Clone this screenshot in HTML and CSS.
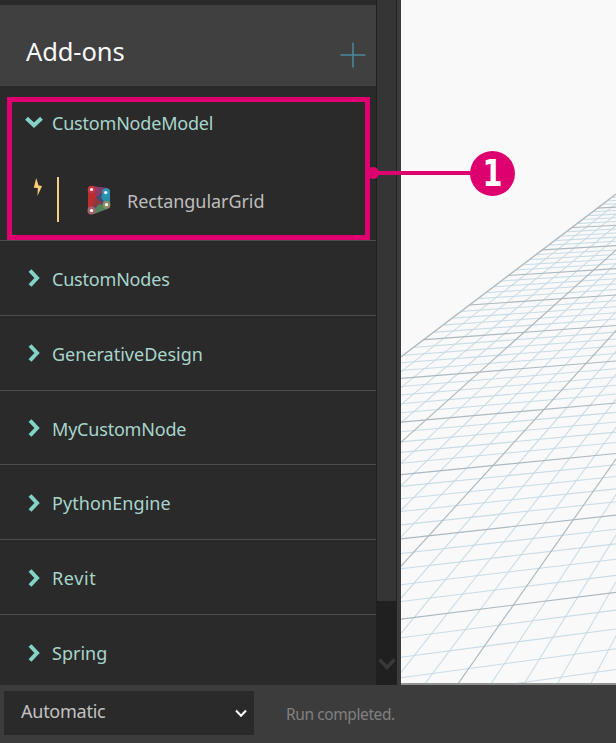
FILE: index.html
```html
<!DOCTYPE html>
<html lang="en">
<head>
<meta charset="utf-8">
<title>Add-ons</title>
<link rel="stylesheet" href="styles.css">
</head>
<body>
<div class="app">
  <div class="workspace">
    <aside class="library">
      <header class="library-header">
        <h1>Add-ons</h1>
        <svg class="plus" viewBox="0 0 26 26"><path d="M13 .5v25M.5 13h25"/></svg>
      </header>
      <section class="package open">
        <div class="row">
          <svg class="chevron" viewBox="0 0 18 18"><path d="M1.5 5.2 9 12.3l7.5-7.1"/></svg>
          <span class="tight">CustomNodeModel</span>
        </div>
        <div class="node">
          <svg class="bolt" viewBox="0 0 10 18"><path d="M3.2 0 .8 9.8l4 .2-.3 8L9 8 5.6 7.5z"/></svg>
          <i class="bar"></i>
          <svg class="node-icon" viewBox="0 0 24 30">
            <path fill="#743f58" d="M1 4Q1 1 4 1L20 3q3 .5 3 3v15q0 2-2 3L5 29q-4 1-4-3z"/>
            <path fill="#b92e30" d="M1 4 4 1l6 10-5 15-4 1z"/>
            <path fill="#883c67" d="M4 1 20 3l-10 9z"/>
            <path fill="#3f4f75" d="m9 12 10-6 1 15-6-5z"/>
            <path fill="#298fae" d="m14 12 5-9 4 3v15l-3 1z"/>
            <path fill="#53835a" d="m5 27 7-8 10 3-2 2L7 29z"/>
            <path fill="#883b3e" d="m4 25 5-13 4 5z"/>
            <circle cx="4.5" cy="4.5" r="3.8" fill="#cc343c"/><circle cx="19" cy="7.3" r="4" fill="#2f94b7"/>
            <circle cx="19.5" cy="19.7" r="4" fill="#8a8b5e"/><circle cx="4.5" cy="25.5" r="4" fill="#9d6670"/>
            <g fill="#fff"><circle cx="4.5" cy="4.5" r="1.6"/><circle cx="18.7" cy="7.5" r="1.6"/><circle cx="19.5" cy="19.7" r="1.6"/><circle cx="4.5" cy="25.5" r="1.6"/></g>
          </svg>
          <span>RectangularGrid</span>
        </div>
      </section>
      <section class="package"><svg class="chevron" viewBox="0 0 18 18"><path d="m5 1.5 7 7.5-7 7.5"/></svg><span class="tight">CustomNodes</span></section>
      <section class="package"><svg class="chevron" viewBox="0 0 18 18"><path d="m5 1.5 7 7.5-7 7.5"/></svg><span>GenerativeDesign</span></section>
      <section class="package"><svg class="chevron" viewBox="0 0 18 18"><path d="m5 1.5 7 7.5-7 7.5"/></svg><span class="tight">MyCustomNode</span></section>
      <section class="package"><svg class="chevron" viewBox="0 0 18 18"><path d="m5 1.5 7 7.5-7 7.5"/></svg><span class="loose">PythonEngine</span></section>
      <section class="package"><svg class="chevron" viewBox="0 0 18 18"><path d="m5 1.5 7 7.5-7 7.5"/></svg><span class="looser">Revit</span></section>
      <section class="package"><svg class="chevron" viewBox="0 0 18 18"><path d="m5 1.5 7 7.5-7 7.5"/></svg><span>Spring</span></section>
    </aside>
    <div class="scrollbar">
      <div class="thumb"></div>
      <svg class="scroll-down" viewBox="0 0 18 14"><path d="m1.5 2.5 7.5 8 7.5-8"/></svg>
    </div>
    <main class="canvas">
      <svg id="grid" viewBox="401 0 215 683">
        <defs><clipPath id="plane"><path d="M401 356.5 616 194V683H401z"/></clipPath></defs>
        <path class="edge" d="M401 356.8 616 194"/>
      </svg>
    </main>
  </div>
  <footer class="runbar">
    <div class="select"><span>Automatic</span><svg viewBox="0 0 12 9"><path d="m1 1.5 5 5.3 5-5.3"/></svg></div>
    <span class="status">Run completed.</span>
  </footer>
  <div class="callout-box"></div>
  <div class="callout-line"></div>
  <div class="callout-number"><span>1</span></div>
</div>
<script src="grid.js"></script>
</body>
</html>
```
FILE: styles.css
```css
* { box-sizing: border-box; }
body { margin: 0; font-family: "Noto Sans", sans-serif; background: #3c3c3c; }
svg { display: block; fill: none; flex: none; }
.app { position: relative; width: 616px; height: 743px; overflow: hidden; display: flex; flex-direction: column; }
.workspace { height: 685px; display: flex; background: #3c3c3c; }
.library { width: 376px; padding-top: 5px; background: #2a2a2a; overflow: hidden; }
.library-header { height: 81px; padding: 12px 10px 0 26px; display: flex; align-items: center; justify-content: space-between; background: #404040; }
h1 { margin: 0; font-size: 25.5px; line-height: 34px; font-weight: 400; color: #f7f7f7; letter-spacing: -.1px; transform: translateY(-1px); }
.plus { width: 26px; height: 26px; stroke: #458a9d; stroke-width: 1.5; margin-top: 6px; }
.package { height: 74.8px; padding: 3px 0 0 25px; display: flex; align-items: center; gap: 9px; border-bottom: 1px solid #4c4c4c; color: #a8d5cb; font-size: 18px; line-height: 26px; }
.package:last-child { border: 0; }
.package.open { height: 155px; padding-top: 24px; display: block; }
.package > span { transform: translateY(-.5px); }
.package:nth-child(n+6) > span { transform: translateY(-1.5px); }
.tight { letter-spacing: -.2px; }
.loose { letter-spacing: .08px; }
.looser { letter-spacing: .6px; }
.row { display: flex; align-items: center; gap: 9px; height: 26px; }
.chevron { width: 18px; height: 18px; stroke: #83d3c7; stroke-width: 4; transform: translateY(-1px); }
.node { display: flex; height: 45px; margin-top: 41px; padding-left: 8px; color: #bdbdbd; }
.bolt { width: 10px; height: 18px; margin-top: 1px; fill: #f8cd76; }
.bar { width: 2px; height: 45px; margin-left: 14px; background: #f9cd86; }
.node-icon { width: 24px; height: 30px; margin: 8px 0 0 28px; }
.node span { margin: 11px 0 0 16px; letter-spacing: -.06px; }
.scrollbar { width: 21px; background: #202020; display: flex; flex-direction: column; align-items: center; }
.thumb { width: 19px; height: 601px; background: #353535; }
.scroll-down { width: 18px; height: 14px; margin-top: 56px; stroke: #393939; stroke-width: 3.5; }
.canvas { width: 215px; height: 685px; margin-left: 4px; background: #f9f9f9; border-bottom: 2px solid #929492; }
#grid { width: 215px; height: 683px; }
.edge { stroke: #b3bbc0; stroke-width: 1.3; }
.minor { stroke: #c9dbe5; stroke-width: 1.05; }
.major { stroke: #adb8be; stroke-width: 1.15; }
.runbar { height: 58px; padding: 6px 0 0 4px; display: flex; background: #3c3c3c; }
.select { width: 250px; height: 44px; padding: 0 7px 3px 17px; display: flex; align-items: center; justify-content: space-between; background: #2a2a2a; color: #c2c2c2; font-size: 18px; letter-spacing: -.25px; }
.select span { transform: translateY(-1px); }
.select svg { width: 12px; height: 9px; margin-top: 4px; stroke: #fff; stroke-width: 2; }
.status { margin: 12px 0 0 32px; color: #808080; font-size: 15.5px; line-height: 22px; letter-spacing: -.4px; }
.callout-box { position: absolute; left: 7px; top: 97px; width: 363px; height: 143px; border: 5px solid #df0070; }
.callout-line { position: absolute; left: 370px; top: 171px; width: 104px; height: 4px; background: #df0070; }
.callout-line::before { content: ""; position: absolute; left: -3px; top: -4px; width: 12px; height: 12px; border-radius: 50%; background: #df0070; }
.callout-number { position: absolute; left: 470px; top: 151px; width: 45px; height: 45px; border-radius: 50%; background: #df0070; color: #fff; font: bold 38px/44px "DejaVu Sans Condensed", "DejaVu Sans", sans-serif; text-align: center; }
.callout-number span { display: block; transform: scaleX(.84); }
```
FILE: grid.js
```js
const svg = document.getElementById('grid');
const NS = 'http://www.w3.org/2000/svg';
const group = document.createElementNS(NS, 'g');
group.setAttribute('clip-path', 'url(#plane)');
svg.appendChild(group);

const lines = [];
// Cross lines, from the far side of the plane to the near side
for (let i = -30; i <= 34; i++) {
  const v = i / 5;
  const d = 12.97 - v;
  lines.push([i % 5 === 0, 401.7, 5742 / d - 101.4, 616, 5517 / d - 99.9]);
}
// Receding lines, five to each major division
for (let j = 0; j <= 24; j++) {
  const u = j / 5;
  lines.push([j % 5 === 0, 423.3 + 92.1 * u, 340, -31 + 160.7 * u + 0.75 * u * u, 684]);
}
lines.sort((a, b) => a[0] - b[0]);
for (const [major, x1, y1, x2, y2] of lines) {
  const line = document.createElementNS(NS, 'line');
  line.setAttribute('class', major ? 'major' : 'minor');
  // Run past the first point so the line reaches the far edge of the plane
  line.setAttribute('x1', 2 * x1 - x2);
  line.setAttribute('y1', 2 * y1 - y2);
  line.setAttribute('x2', x2);
  line.setAttribute('y2', y2);
  group.appendChild(line);
}
```
